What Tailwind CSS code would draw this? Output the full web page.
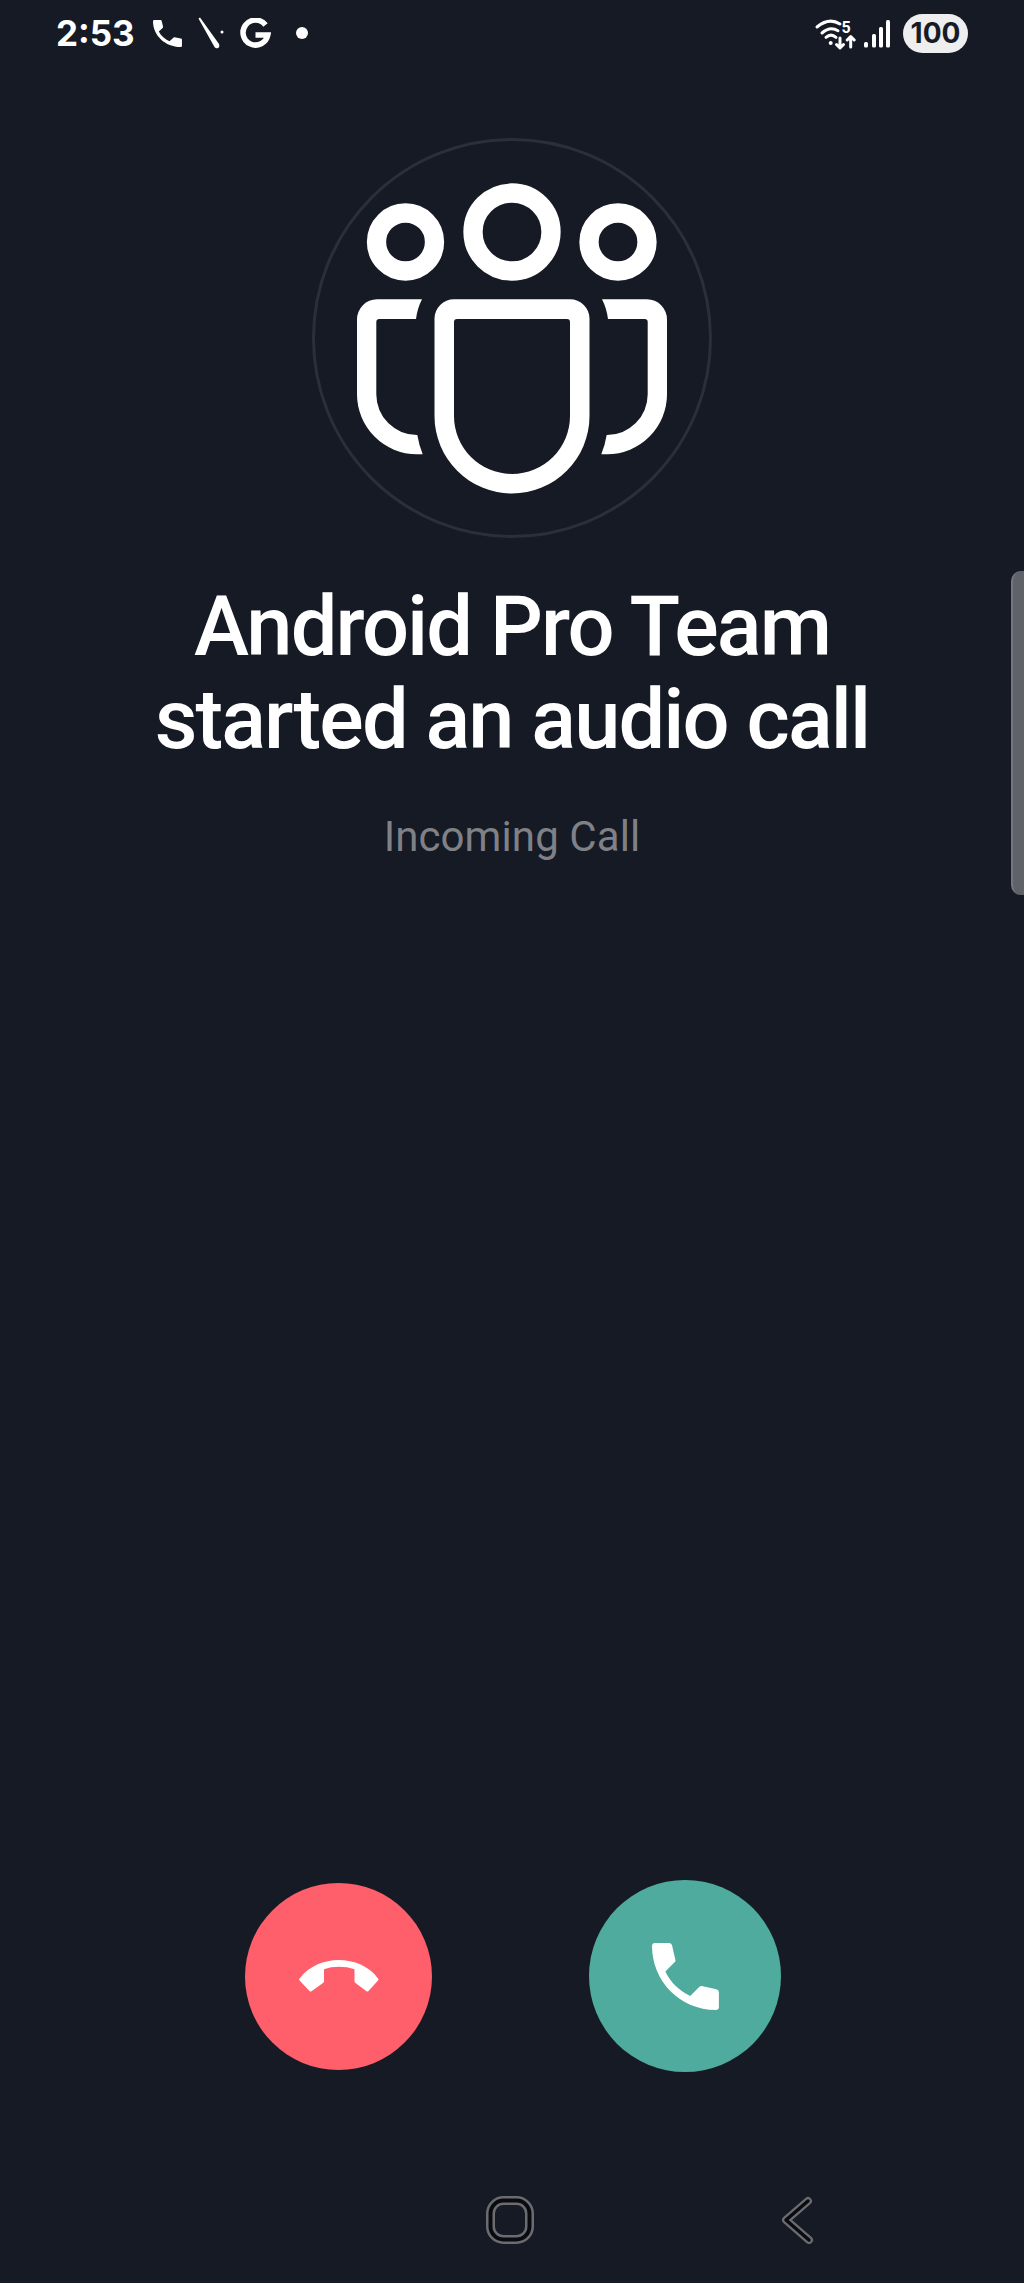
<!DOCTYPE html>
<html lang="en">
<head>
  <meta charset="UTF-8">
  <meta name="viewport" content="width=device-width, initial-scale=1.0">
  <title>Incoming Call</title>
  <script src="https://cdn.jsdelivr.net/npm/@tailwindcss/browser@4"></script>
</head>
<body class="bg-[#151a25] font-['Roboto',sans-serif]">
  <div class="relative h-[2283px] w-[1024px] flex flex-col overflow-hidden bg-[#151a25]">

    <!-- status bar -->
    <div class="h-[66px] flex items-start justify-between pl-[56px] pr-[56px] pt-[13px] text-white">
      <div class="flex items-center h-[40px]">
        <span class="font-['Inter',sans-serif] font-bold text-[35px] leading-[40px] w-[97px]">2:53</span>
        <svg class="w-[29px] h-[27px]" viewBox="0 0 66.7 66.7" preserveAspectRatio="none" fill="#fff"><path d="M3 0H17a3 3 0 0 1 3 2.6L23.3 17a2 2 0 0 1-.6 2L13.3 28.3C19 40 27 47 38 52.7L47.5 43.4a2 2 0 0 1 2-.5L64 46a3 3 0 0 1 2.6 3V63.7a3 3 0 0 1-3 3C28 66.7 0 38 0 3a3 3 0 0 1 3-3Z"/></svg>
        <svg class="ml-[16px] w-[26px] h-[32px]" viewBox="0 0 26 32" fill="#fff"><path d="M0.5 1.500L2 0.500L21 27Q22 30 20 31Q18 32 16.500 30Z"/><circle cx="24" cy="15" r="1.500"/></svg>
        <svg class="ml-[16px] w-[31px] h-[30px]" viewBox="0 0 31 30" fill="none" stroke="#fff" stroke-width="5.500"><path d="M25.500 7A12.500 12.500 0 1 0 27.800 17H15.500"/></svg>
        <span class="ml-[25px] w-[12px] h-[12px] rounded-full bg-white"></span>
      </div>
      <div class="flex items-center h-[40px]">
        <svg class="w-[42px] h-[40px]" viewBox="0 0 42 40" fill="none" stroke="#fff" stroke-width="3" stroke-linecap="round" stroke-linejoin="round">
          <path d="M3 14Q15 4 26 11"/>
          <path d="M8 20Q16 13 24 17.700"/>
          <path d="M12 24.300Q17 20 22 24.300"/>
          <circle cx="16.700" cy="30" r="2" fill="#fff" stroke="none"/>
          <path d="M26 25V35M22.500 31.500L26 35L29.500 31.500"/>
          <path d="M36.700 34V23.500M33.200 27L36.700 23.500L40.200 27"/>
          <text x="27.500" y="19.500" fill="#fff" stroke="none" font-size="16" font-weight="700" font-family="Roboto, sans-serif">5</text>
        </svg>
        <svg class="ml-[8px] w-[26px] h-[30px]" viewBox="0 0 26 30" fill="#fff"><rect x="0" y="24" width="4" height="5.500" rx="1.500"/><rect x="8" y="16" width="4" height="13.500" rx="1.500"/><rect x="15" y="9" width="4" height="20.500" rx="1.500"/><rect x="22" y="2" width="4" height="27.500" rx="1.500"/></svg>
        <span class="ml-[13px] w-[65px] h-[39px] rounded-full bg-[#eeeeee] text-[#161b26] font-['Inter',sans-serif] font-bold text-[28px] leading-[39px] text-center">100</span>
      </div>
    </div>

    <!-- group avatar -->
    <div class="mt-[72px] mx-auto w-[400px] h-[400px] rounded-full border-[3px] border-[#2a2f3a] flex items-center justify-center">
      <svg class="w-[310px] h-[312px]" viewBox="357 182 310 312" fill="#fff" fill-rule="evenodd">
        <circle cx="512" cy="232" r="39" fill="none" stroke="#fff" stroke-width="19.300"/>
        <circle cx="405.500" cy="242" r="29" fill="none" stroke="#fff" stroke-width="19.300"/>
        <circle cx="618" cy="242" r="29" fill="none" stroke="#fff" stroke-width="19.300"/>
        <path d="M454 299.300H570A19.500 19.500 0 0 1 589.500 318.800V416A77.500 77.500 0 0 1 434.500 416V318.800A19.500 19.500 0 0 1 454 299.300ZM457 319A3 3 0 0 0 454 322V416A58 58 0 0 0 570 416V322A3 3 0 0 0 567 319Z"/>
        <path d="M422 299.300H377A20 20 0 0 0 357 319.300V394A60 60 0 0 0 417 454.300H422.700Q419 445 417.300 435H417A40.700 40.700 0 0 1 376.300 394.300V322A3 3 0 0 1 379.300 319H416Q417.500 308 422 299.300Z"/>
        <path d="M602 299.300H647A20 20 0 0 1 667 319.300V394A60 60 0 0 1 607 454.300H601.300Q605 445 606.700 435H607A40.700 40.700 0 0 0 647.700 394.300V322A3 3 0 0 0 644.700 319H608Q606.500 308 602 299.300Z"/>
      </svg>
    </div>

    <!-- caller -->
    <h1 class="mt-[42px] text-center text-white font-medium text-[83px] leading-[93px] tracking-[-1.9px]">Android Pro Team<br>started an audio call</h1>
    <p class="mt-[46px] text-center text-[#7f8187] text-[42px] leading-[50px] tracking-[0.1px]">Incoming Call</p>

    <!-- call actions -->
    <div class="mt-auto flex items-center pl-[245px]">
      <button class="w-[187px] h-[187px] rounded-full bg-[#ff5f6b] flex items-center justify-center">
        <svg class="w-[80px] h-[32px]" viewBox="0 0 80 32" fill="#fff"><path d="M.6 18.500C10 6 25 0 39.700 0C55 0 70 6 79 18.500a1.500 1.500 0 0 1 0 2L69.500 31a1.500 1.500 0 0 1-2 .2L56.500 23a2.500 2.500 0 0 1-1-2V9.300C46 6 34 6 25 9.300V21a2.500 2.500 0 0 1-1 2L12.500 31.200a1.500 1.500 0 0 1-2-.2L.6 20.500a1.500 1.500 0 0 1 0-2Z"/></svg>
      </button>
      <button class="ml-[157px] w-[192px] h-[192px] rounded-full bg-[#50ab9f] flex items-center justify-center">
        <svg class="w-[67px] h-[67px]" viewBox="0 0 66.700 66.700" fill="#fff"><path d="M3 0H17a3 3 0 0 1 3 2.600L23.300 17a2 2 0 0 1-.6 2L13.300 28.300C19 40 27 47 38 52.700L47.500 43.400a2 2 0 0 1 2-.5L64 46a3 3 0 0 1 2.600 3V63.700a3 3 0 0 1-3 3C28 66.700 0 38 0 3a3 3 0 0 1 3-3Z"/></svg>
      </button>
    </div>

    <!-- navigation bar -->
    <div class="mt-[124px] mb-[39px] h-[48px] flex items-center pl-[486px]">
      <svg class="w-[48px] h-[48px]" viewBox="0 0 48 48" fill="none" stroke-linejoin="round">
        <rect x="4.500" y="4.500" width="39" height="39" rx="13" stroke="#6a6c72" stroke-width="9"/>
        <rect x="4.500" y="4.500" width="39" height="39" rx="13" stroke="#0a0b0e" stroke-width="4"/>
      </svg>
      <svg class="ml-[248px] w-[32px] h-[48px]" viewBox="0 0 32 48" fill="none" stroke-linecap="round" stroke-linejoin="round">
        <path d="M26 5L4 24L27 44" stroke="#6a6c72" stroke-width="8"/>
        <path d="M26 5L4 24L27 44" stroke="#0a0b0e" stroke-width="3.500"/>
      </svg>
    </div>

    <!-- edge panel handle -->
    <div class="absolute right-0 top-[571px] w-[13px] h-[324px] rounded-l-[10px] bg-[#5f6268] border-l-2 border-[#75777c]"></div>
  </div>
</body>
</html>
